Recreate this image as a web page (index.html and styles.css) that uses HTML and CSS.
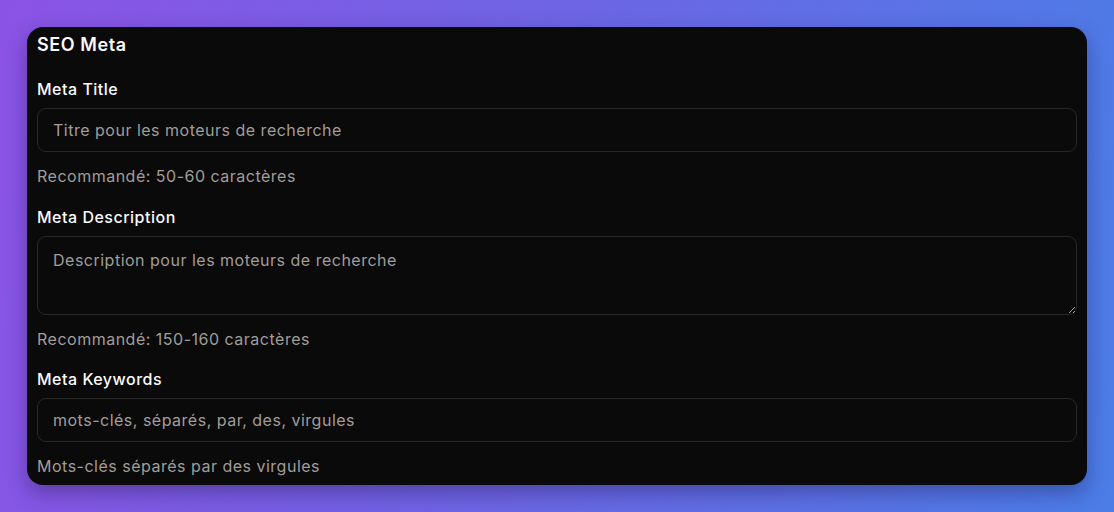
FILE: index.html
```html
<!DOCTYPE html>
<html lang="fr">
<head>
<meta charset="utf-8">
<title>SEO Meta</title>
<link rel="stylesheet" href="styles.css">
</head>
<body>
<main class="page">
  <section class="card">
    <h3 class="card-title">SEO Meta</h3>
    <div class="field">
      <label class="label" for="mt">Meta Title</label>
      <input class="input" id="mt" type="text" placeholder="Titre pour les moteurs de recherche">
      <p class="hint">Recommandé: 50-60 caractères</p>
    </div>
    <div class="field">
      <label class="label" for="md">Meta Description</label>
      <textarea class="input textarea" id="md" placeholder="Description pour les moteurs de recherche"></textarea>
      <p class="hint">Recommandé: 150-160 caractères</p>
    </div>
    <div class="field">
      <label class="label" for="mk">Meta Keywords</label>
      <input class="input" id="mk" type="text" placeholder="mots-clés, séparés, par, des, virgules">
      <p class="hint">Mots-clés séparés par des virgules</p>
    </div>
  </section>
</main>
</body>
</html>
```
FILE: styles.css
```css
* { box-sizing: border-box; }
html, body { margin: 0; height: 100%; }
body {
  font-family: Inter, "Noto Sans", "Liberation Sans", sans-serif;
  letter-spacing: 0.5px;
  background: linear-gradient(100deg, #8b53e5 0%, #6c66e4 50%, #4b7de7 100%);
  color: #fafafa;
}
.page {
  padding: 27px 27px 0 27px;
}
.card {
  background: #0a0a0a;
  border-radius: 16px;
  padding: 4px 10px 7px 10px;
  box-shadow: 0 8px 20px rgba(20, 10, 60, 0.35);
  display: flex;
  flex-direction: column;
  gap: 16.6px;
}
.card-title {
  margin: 0 0 1.4px 0;
  font-size: 18px;
  line-height: 28px;
  font-weight: 600;
  letter-spacing: 0.6px;
  color: #fafafa;
}
.field {
  display: flex;
  flex-direction: column;
}
.label {
  font-size: 16px;
  line-height: 24px;
  font-weight: 500;
  color: #fafafa;
  margin-bottom: 7px;
}
.input {
  display: block;
  width: 100%;
  height: 44px;
  padding: 0 15px;
  background: #0a0a0a;
  border: 1px solid #282828;
  border-radius: 9px;
  font-family: inherit;
  font-size: 16px;
  letter-spacing: 0.5px;
  color: #fafafa;
  outline: none;
}
.input::placeholder { color: #a19d99; opacity: 1; }
.textarea {
  height: 79px;
  padding: 11px 15px;
  line-height: 24px;
  resize: vertical;
}
.hint {
  margin: 12px 0 0 0;
  font-size: 16px;
  line-height: 24px;
  color: #a19d99;
}
```
